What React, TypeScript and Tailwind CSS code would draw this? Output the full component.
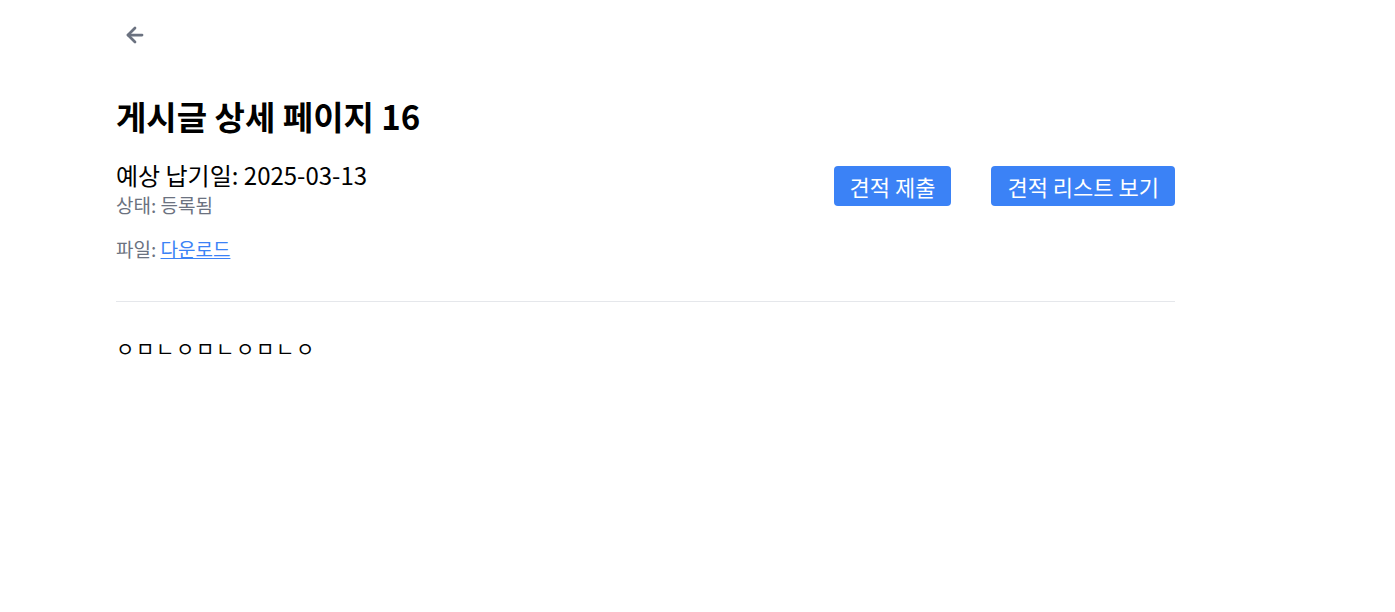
import React from 'react'
import { ArrowLeft } from 'lucide-react'

const FONT = "font-['Noto_Sans_CJK_KR','Noto_Sans',sans-serif]"

export default function App() {
  return (
    <div className={`min-h-screen bg-white ${FONT}`}>
      <div className="ml-[116px] w-[1059px] pt-[23px]">
        {/* back */}
        <button aria-label="뒤로" className="ml-[7px] flex text-[#6b7280]">
          <ArrowLeft className="w-[24px] h-[24px]" strokeWidth={2.75} />
        </button>

        <h1 className="mt-[47px] text-[33px] font-bold leading-[44px] text-black">
          게시글 상세 페이지 16
        </h1>

        <div className="mt-[20px] flex items-start justify-between">
          <div>
            <p className="text-[24px] leading-[34px] text-black">예상 납기일: 2025-03-13</p>
            <p className="text-[19px] leading-[26px] text-[#6b7280]">상태: 등록됨</p>
            <p className="mt-[18px] text-[19px] leading-[26px] text-[#6b7280]">
              파일:{' '}
              <a href="#" className="text-[#3b82f6] underline">다운로드</a>
            </p>
          </div>
          <div className="flex gap-[40px] pt-[8px]">
            <button className="h-[40px] px-[16px] rounded bg-[#3b82f6] text-white text-[22px] leading-[40px]">
              견적 제출
            </button>
            <button className="h-[40px] px-[16px] rounded bg-[#3b82f6] text-white text-[22px] leading-[40px]">
              견적 리스트 보기
            </button>
          </div>
        </div>

        <hr className="mt-[39px] border-[#e5e7eb]" />

        <div className="mt-[33px] text-[20px] leading-[28px] tracking-[1.6px] text-black">ㅇㅁㄴㅇㅁㄴㅇㅁㄴㅇ</div>
      </div>
    </div>
  )
}
